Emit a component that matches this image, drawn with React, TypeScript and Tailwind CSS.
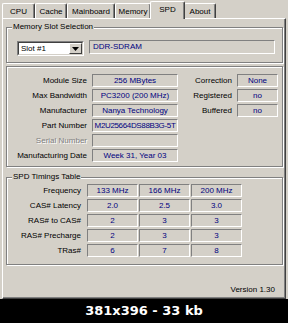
import React from "react";

function Field({ children, className = "" }: { children?: React.ReactNode; className?: string }) {
  return (
    <div
      className={`flex h-[13px] items-center justify-center overflow-hidden whitespace-nowrap border border-t-[#808080] border-l-[#808080] border-b-white border-r-white text-[8px] leading-[10px] text-[#000080] ${className}`}
    >
      {children}
    </div>
  );
}

function Label({ children, className = "" }: { children: React.ReactNode; className?: string }) {
  return <div className={`whitespace-nowrap text-right text-[8px] leading-[10px] text-black ${className}`}>{children}</div>;
}

function Group({
  title,
  className = "",
  children,
}: {
  title?: string;
  className?: string;
  children?: React.ReactNode;
}) {
  return (
    <div className={`relative border border-[#808080] shadow-[inset_1px_1px_0_#fff,1px_1px_0_#fff] ${className}`}>
      {title && (
        <span className="absolute left-[5px] -top-[6px] bg-[#d4d0c8] px-[1px] text-[8px] leading-[10px] text-black">
          {title}
        </span>
      )}
      {children}
    </div>
  );
}

function Tab({ label, w }: { label: string; w: string }) {
  return (
    <div
      className={`flex h-[15px] ${w} items-center justify-center rounded-t-[2px] border-l border-t border-r border-l-white border-t-white border-r-[#404040] pt-[1px] text-[8px] leading-[10px] text-black shadow-[inset_-1px_0_0_#808080]`}
    >
      {label}
    </div>
  );
}

export default function App() {
  const leftRows = [
    ["Module Size", "256 MBytes"],
    ["Max Bandwidth", "PC3200 (200 MHz)"],
    ["Manufacturer", "Nanya Technology"],
    ["Part Number", "M2U25664DS88B3G-5T"],
    ["Serial Number", ""],
    ["Manufacturing Date", "Week 31, Year 03"],
  ];
  const rightRows = [
    ["Correction", "None"],
    ["Registered", "no"],
    ["Buffered", "no"],
  ];
  const timings = [
    ["Frequency", "133 MHz", "166 MHz", "200 MHz"],
    ["CAS# Latency", "2.0", "2.5", "3.0"],
    ["RAS# to CAS#", "2", "3", "3"],
    ["RAS# Precharge", "2", "3", "3"],
    ["TRas#", "6", "7", "8"],
  ];

  return (
    <div className="flex h-[323px] w-[288px] flex-col overflow-hidden bg-[#d4d0c8] font-['Liberation_Sans',Arial,sans-serif]">
      {/* tab area */}
      <div className="flex h-[299px] flex-col px-[2px]">
        <div className="flex h-[18px] items-end">
          <Tab label="CPU" w="w-[33px]" />
          <Tab label="Cache" w="w-[32px]" />
          <Tab label="Mainboard" w="w-[48px]" />
          <Tab label="Memory" w="w-[36px]" />
          <div className="relative z-10 -mx-[1px] -mb-[1px] flex h-[18px] w-[35px] items-start justify-center rounded-t-[2px] border-l border-t border-r border-l-white border-t-white border-r-[#404040] bg-[#d4d0c8] pt-[3px] text-[8px] leading-[10px] text-black shadow-[inset_-1px_0_0_#808080]">
            SPD
          </div>
          <Tab label="About" w="w-[32px]" />
        </div>
        <div className="flex h-[281px] flex-col border border-l-white border-t-white border-r-[#404040] border-b-[#404040] shadow-[inset_-1px_-1px_0_#808080]">
          {/* group 1 */}
          <Group title="Memory Slot Selection" className="ml-[3px] mt-[8px] h-[36px] w-[277px]">
            <div className="flex items-start pl-[10px] pt-[12px]">
              <div className="mt-[1px] flex h-[15px] w-[67px] border border-t-[#808080] border-l-[#808080] border-b-white border-r-white">
                <div className="flex flex-1 border border-t-[#404040] border-l-[#404040] border-b-[#d4d0c8] border-r-[#d4d0c8] bg-white">
                  <div className="flex flex-1 items-center pl-[2px] text-[8px] leading-[10px] text-black">Slot #1</div>
                  <div className="flex w-[13px] items-center justify-center border border-l-white border-t-white border-r-[#404040] border-b-[#404040] bg-[#d4d0c8]">
                    <svg width="7" height="4" viewBox="0 0 7 4">
                      <path d="M0 0h7L3.5 4z" fill="#000" />
                    </svg>
                  </div>
                </div>
              </div>
              <div className="ml-[5px] flex h-[14px] w-[186px] items-center border border-t-[#808080] border-l-[#808080] border-b-white border-r-white pl-[3px] text-[8px] leading-[10px] text-[#000080]">
                DDR-SDRAM
              </div>
            </div>
          </Group>

          {/* group 2 */}
          <Group className="ml-[3px] mt-[3px] h-[101px] w-[277px]">
            <div className="flex pt-[7px]">
              <div className="flex flex-col gap-[2px]">
                {leftRows.map(([l, v]) => (
                  <div key={l} className="flex items-center">
                    {l === "Serial Number" ? (
                      <Label className="w-[80px] !text-[#808080] [text-shadow:1px_1px_0_#fff]">{l}</Label>
                    ) : (
                      <Label className="w-[80px]">{l}</Label>
                    )}
                    <Field className={`ml-[5px] w-[86px] ${l === "Part Number" ? "tracking-[-0.35px]" : ""}`}>{v}</Field>
                  </div>
                ))}
              </div>
              <div className="flex flex-col gap-[2px]">
                {rightRows.map(([l, v]) => (
                  <div key={l} className="flex items-center">
                    <Label className="w-[54px]">{l}</Label>
                    <Field className="ml-[5px] w-[41px]">{v}</Field>
                  </div>
                ))}
              </div>
            </div>
          </Group>

          {/* group 3 */}
          <Group title="SPD Timings Table" className="ml-[3px] mt-[10px] h-[88px] w-[277px]">
            <div className="flex flex-col gap-[2px] pt-[6px]">
              {timings.map(([l, a, b, c]) => (
                <div key={l} className="flex items-center">
                  <Label className="w-[74px]">{l}</Label>
                  <div className="ml-[6px] flex gap-[1px]">
                    <Field className="w-[51px]">{a}</Field>
                    <Field className="w-[51px]">{b}</Field>
                    <Field className="w-[51px]">{c}</Field>
                  </div>
                </div>
              ))}
            </div>
          </Group>

          <div className="mt-[20px] pr-[10px] text-right text-[8px] leading-[10px] text-black">Version 1.30</div>
        </div>
      </div>

      {/* bottom bar */}
      <div className="flex h-[24px] items-center justify-center bg-black font-['DejaVu_Sans',sans-serif] text-[13px] font-bold leading-[16px] text-white">
        381x396 - 33 kb
      </div>
    </div>
  );
}
